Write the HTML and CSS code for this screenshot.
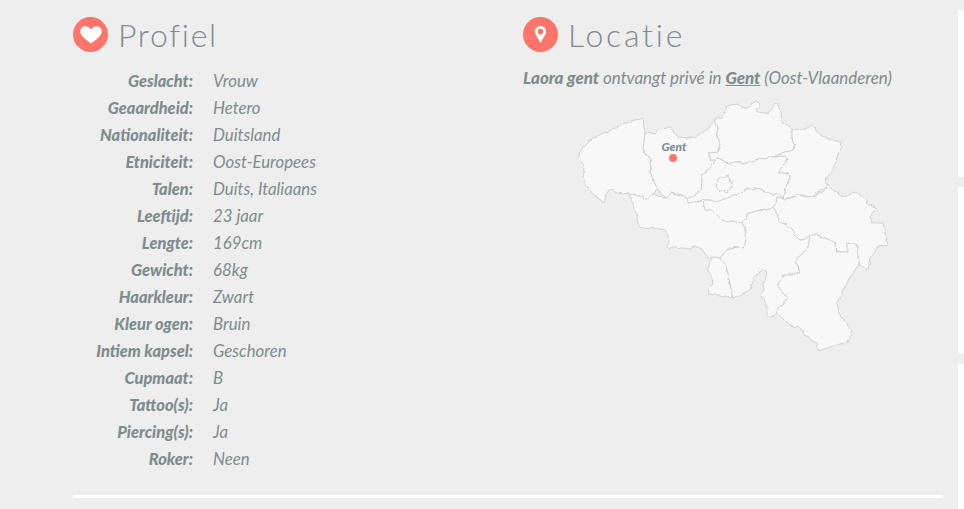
FILE: index.html
```html
<!DOCTYPE html>
<html lang="nl">
<head>
  <meta charset="UTF-8">
  <meta name="viewport" content="width=device-width, initial-scale=1.0">
  <title>Laora gent</title>
  <link rel="stylesheet" href="styles.css">
</head>

<body>
  <div class="page">
    <main class="main">
      <div class="columns">
        <!-- Profiel -->
        <section class="profile">
          <h2 class="section-title">
            <span class="title-icon">
              <svg width="22" height="18" viewBox="0 0 22 18"><path d="M11 17.6 C9 15.4 0.2 10.6 0.2 5.2 C0.2 2.2 2.6 0.2 5.4 0.2 C7.8 0.2 9.9 1.5 11 3.6 C12.1 1.5 14.2 0.2 16.6 0.2 C19.4 0.2 21.8 2.2 21.8 5.2 C21.8 10.6 13 15.4 11 17.6 Z" fill="#fff"/></svg>
            </span>
            Profiel
          </h2>
          <dl class="facts">
            <dt>Geslacht:</dt><dd>Vrouw</dd>
            <dt>Geaardheid:</dt><dd>Hetero</dd>
            <dt>Nationaliteit:</dt><dd>Duitsland</dd>
            <dt>Etniciteit:</dt><dd>Oost-Europees</dd>
            <dt>Talen:</dt><dd>Duits, Italiaans</dd>
            <dt>Leeftijd:</dt><dd>23 jaar</dd>
            <dt>Lengte:</dt><dd>169cm</dd>
            <dt>Gewicht:</dt><dd>68kg</dd>
            <dt>Haarkleur:</dt><dd>Zwart</dd>
            <dt>Kleur ogen:</dt><dd>Bruin</dd>
            <dt>Intiem kapsel:</dt><dd>Geschoren</dd>
            <dt>Cupmaat:</dt><dd>B</dd>
            <dt>Tattoo(s):</dt><dd>Ja</dd>
            <dt>Piercing(s):</dt><dd>Ja</dd>
            <dt>Roker:</dt><dd>Neen</dd>
          </dl>
        </section>

        <!-- Locatie -->
        <section class="location">
          <h2 class="section-title section-title-wide">
            <span class="title-icon">
              <svg width="11" height="17" viewBox="0 0 11 17"><path fill-rule="evenodd" d="M5.5 0 C2.4 0 0 2.4 0 5.4 C0 9 3.6 12.6 5.5 17 C7.4 12.6 11 9 11 5.4 C11 2.4 8.6 0 5.5 0 Z M5.5 2.8 A2.8 2.8 0 1 1 5.5 8.4 A2.8 2.8 0 1 1 5.5 2.8 Z" fill="#fff"/></svg>
            </span>
            Locatie
          </h2>
          <p class="intro"><strong>Laora gent</strong> ontvangt privé in <a href="#" class="city-link">Gent</a> (Oost-Vlaanderen)</p>

          <svg class="map" width="330" height="265" viewBox="570 95 330 265">
            <!-- maakt de grenzen wat grilliger -->
            <filter id="rough" x="-5%" y="-5%" width="110%" height="110%">
              <feTurbulence type="fractalNoise" baseFrequency="0.16" numOctaves="2" seed="4"/>
              <feDisplacementMap in="SourceGraphic" scale="3.5" xChannelSelector="R" yChannelSelector="G"/>
            </filter>
            <g class="provinces" filter="url(#rough)">
              <!-- West-Vlaanderen -->
              <path d="M578 153 L586 145 L593 138 L610 130 L625 123 L643 118 L644 126 L645 133 L644 142 L643 152 L651 158 L650 163 L651 168 L650 172 L653 178 L655 184 L658 189 L652 195 L645 201 L642 196 L635 196 L628 193 L622 194 L617 193 L613 189 L609 190 L605 196 L605 203 L598 198 L592 193 L588 188 L583 178 L584 172 L583 165 L580 160 Z"/>
              <!-- Oost-Vlaanderen -->
              <path d="M645 133 L655 134 L658 129 L670 128 L674 132 L678 137 L690 138 L697 136 L703 132 L708 129 L712 123 L715 118 L718 127 L717 135 L720 143 L718 152 L710 153 L710 160 L716 160 L711 167 L707 172 L702 175 L702 182 L701 190 L696 194 L690 198 L687 198 L684 196 L680 194 L674 197 L668 198 L664 195 L660 193 L658 189 L655 184 L653 178 L650 172 L651 168 L650 163 L651 158 L643 152 L644 142 Z"/>
              <!-- Antwerpen -->
              <path d="M714 118 L723 118 L725 111 L725 107 L731 105 L737 104 L742 107 L747 108 L751 106 L755 102 L757 101 L759 105 L759 108 L755 110 L758 112 L763 113 L768 113 L771 109 L775 103 L779 105 L781 112 L782 122 L787 125 L792 128 L792 136 L793 143 L795 145 L794 149 L789 151 L783 153 L777 155 L773 157 L768 157 L763 160 L758 159 L754 161 L750 161 L747 163 L743 164 L737 162 L730 163 L724 162 L718 159 L716 160 L710 160 L710 153 L718 152 L720 143 L717 135 L718 127 Z"/>
              <!-- Limburg -->
              <path d="M792 130 L799 129 L805 129 L809 127 L812 125 L815 128 L817 133 L822 136 L827 138 L834 140 L840 142 L842 147 L839 152 L837 157 L835 165 L833 170 L829 175 L825 180 L826 183 L828 186 L822 190 L817 193 L812 196 L808 197 L803 195 L798 195 L793 197 L788 198 L783 199 L784 194 L785 188 L788 182 L790 175 L784 173 L778 172 L782 167 L787 160 L786 157 L783 156 L775 157 L783 153 L789 151 L794 149 L795 145 L793 143 L792 136 Z"/>
              <!-- Vlaams-Brabant -->
              <path d="M716 160 L718 159 L724 162 L730 163 L737 162 L743 164 L747 163 L750 161 L754 161 L758 159 L763 160 L768 157 L775 157 L783 156 L786 157 L787 160 L782 167 L778 172 L784 173 L790 175 L788 182 L785 188 L784 194 L783 199 L778 193 L773 195 L765 191 L760 189 L755 188 L747 189 L743 192 L738 195 L733 195 L730 197 L724 199 L717 202 L710 200 L703 200 L695 202 L688 203 L687 198 L690 198 L696 194 L701 190 L702 182 L702 175 L707 172 L711 167 Z"/>
              <!-- Brussel -->
              <path d="M715 185 L718 181 L720 177 L724 177 L728 175 L730 180 L733 185 L730 189 L727 193 L723 191 L720 192 L717 188 Z"/>
              <!-- Waals-Brabant -->
              <path d="M703 200 L710 200 L717 202 L724 199 L730 197 L733 195 L738 195 L743 192 L747 189 L755 188 L760 189 L765 191 L773 195 L778 193 L783 199 L777 197 L776 203 L773 208 L766 210 L757 211 L750 213 L748 213 L746 218 L742 223 L736 222 L728 221 L722 220 L717 215 L712 210 L705 210 Z"/>
              <!-- Henegouwen -->
              <path d="M628 193 L635 196 L642 196 L645 201 L652 195 L655 194 L661 196 L667 198 L670 194 L672 193 L680 195 L687 197 L688 203 L695 202 L703 200 L705 210 L712 210 L717 215 L722 220 L728 221 L736 222 L742 223 L745 228 L745 233 L746 240 L744 248 L738 247 L733 248 L726 251 L720 258 L713 257 L708 258 L704 252 L698 247 L694 247 L690 249 L683 248 L675 247 L670 250 L668 245 L668 235 L665 230 L659 229 L653 226 L649 229 L645 228 L640 226 L638 223 L636 213 L634 205 L631 199 Z"/>
              <path d="M720 258 L727 268 L729 278 L733 298 L724 297 L716 295 L709 294 L708 288 L713 283 L711 275 L708 270 L710 262 L713 257 Z"/>
              <!-- Namen -->
              <path d="M748 213 L750 213 L757 211 L766 210 L773 208 L777 214 L780 222 L787 225 L793 230 L796 236 L800 240 L805 239 L810 235 L809 243 L807 250 L801 255 L795 260 L798 266 L800 273 L792 275 L783 275 L781 280 L777 285 L782 291 L788 298 L782 305 L777 313 L772 316 L767 316 L767 305 L761 296 L764 285 L767 272 L762 269 L757 274 L752 280 L751 286 L750 290 L742 294 L733 298 L729 278 L727 268 L720 258 L726 251 L733 248 L738 247 L744 248 L746 240 L745 233 L745 228 L742 223 L746 218 Z"/>
              <!-- Luik -->
              <path d="M777 197 L785 199 L791 198 L798 195 L806 197 L813 196 L818 194 L823 192 L828 186 L832 190 L837 192 L841 196 L847 197 L851 194 L855 192 L861 195 L867 200 L868 205 L873 206 L877 208 L873 212 L870 217 L872 223 L878 223 L883 223 L885 233 L888 245 L883 246 L878 247 L874 252 L870 258 L869 264 L868 270 L865 266 L859 265 L858 255 L858 245 L847 243 L847 252 L842 252 L837 253 L836 247 L834 242 L825 238 L817 235 L810 235 L805 239 L800 240 L796 236 L793 230 L787 225 L780 222 L777 214 L773 208 L776 203 Z"/>
              <!-- Luxemburg -->
              <path d="M810 235 L817 235 L825 238 L834 242 L836 247 L837 253 L842 252 L847 252 L847 243 L858 245 L858 255 L859 265 L855 270 L850 277 L845 287 L841 295 L837 302 L838 309 L840 315 L846 322 L852 330 L850 337 L848 343 L840 344 L830 347 L824 349 L818 351 L817 343 L811 340 L805 335 L803 330 L797 327 L790 325 L783 319 L777 313 L782 305 L788 298 L782 291 L777 285 L781 280 L783 275 L792 275 L800 273 L798 266 L795 260 L801 255 L807 250 L809 243 Z"/>
            </g>
            <text class="map-label" x="674" y="151" text-anchor="middle">Gent</text>
            <circle class="map-dot" cx="673" cy="158" r="4"/>
          </svg>
        </section>
      </div>
      <hr class="divider">
    </main>

    <aside class="sidebar">
      <div class="panel"></div>
      <div class="panel"></div>
      <div class="panel"></div>
    </aside>
  </div>
</body>
</html>
```

FILE: styles.css
```css
html, body {
  margin: 0;
  height: 100%;
  overflow: hidden;
}

body {
  background-color: #eee;
  color: #7f8c8d;
  font-family: Lato, Arial, sans-serif;
}

.page {
  display: flex;
  height: 509px;
}

.main {
  width: 870px;
  padding: 17px 15px 0 73px;
}

.columns {
  display: flex;
  height: 478px;
}

.profile {
  width: 450px;
}

.location {
  width: 420px;
}

.section-title {
  display: flex;
  align-items: center;
  gap: 10px;
  height: 35px;
  margin: 0;
  font-size: 32px;
  font-weight: 300;
  letter-spacing: 1.7px;
}

.section-title-wide {
  letter-spacing: 2.8px;
}

.title-icon {
  display: flex;
  align-items: center;
  justify-content: center;
  width: 35px;
  height: 35px;
  border-radius: 50%;
  background-color: #ff7569;
}

.facts {
  display: grid;
  grid-template-columns: 120px 1fr;
  grid-auto-rows: 27px;
  column-gap: 20px;
  margin: 15px 0 0;
  font-size: 16.8px;
  font-style: italic;
  line-height: 27px;
}

.facts dt {
  font-size: 16.4px;
  font-weight: 900;
  text-align: right;
}

.facts dd {
  margin: 0;
}

.intro {
  margin: 15px 0 0;
  font-size: 16.9px;
  font-style: italic;
  line-height: 22px;
}

.intro strong {
  font-weight: 900;
}

.city-link {
  color: inherit;
  font-weight: 900;
}

.map {
  display: block;
  margin: 6px 0 0 47px;
}

.provinces path {
  fill: #f8f8f8;
  stroke: #d2d2d2;
  stroke-width: 1;
  stroke-linejoin: round;
}

.map-label {
  fill: #7f8c8d;
  font-size: 12px;
  font-style: italic;
  font-weight: 900;
}

.map-dot {
  fill: #ff7569;
}

.divider {
  height: 3px;
  margin: 0;
  border: 0;
  background-color: #fff;
}

.sidebar {
  display: flex;
  flex-direction: column;
  gap: 10px;
  flex: 1;
  padding-top: 10px;
}

.panel {
  flex: 0 0 167px;
  background-color: #fff;
}

.panel:last-child {
  flex: 1;
}
```
